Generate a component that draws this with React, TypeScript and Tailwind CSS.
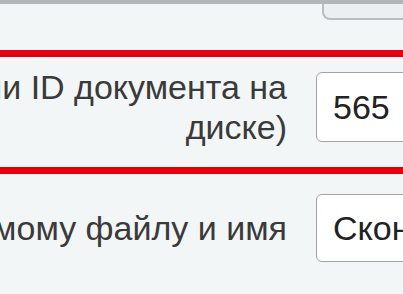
export default function App() {
  return (
    <div className="flex h-[294px] w-[403px] flex-col overflow-hidden bg-[#f3f6f7] font-['Liberation_Sans',Arial,sans-serif] text-[#3a3a3a]">
      <div className="h-[4px] shrink-0 bg-[#b2b5b9]" />
      <div className="ml-[322px] h-[16px] w-[120px] shrink-0 rounded-bl-[8px] border-b-2 border-l-2 border-[#b9bdc0] bg-[#eceff0]" />
      <div className="h-[30px] shrink-0" />

      {/* highlighted row */}
      <div className="flex shrink-0 items-center border-y-[7px] border-[#e3000f] pt-[10px] pb-[20px]">
        <div className="flex w-[287px] shrink-0 flex-col items-end whitespace-nowrap text-[34px] leading-[40px]">
          <span>(или ID документа на</span>
          <span>диске)</span>
        </div>
        <div className="ml-[29px] flex h-[70px] w-[200px] shrink-0 items-center rounded-[6px] border border-[#a3a3a3] bg-white pl-[16px] text-[34px] text-[#222]">
          565
        </div>
      </div>

      <div className="flex shrink-0 items-center pt-[20px] pb-[35px]">
        <div className="flex w-[287px] shrink-0 flex-col items-end whitespace-nowrap text-[34px] leading-[40px]">
          <span>сохраняемому файлу и имя</span>
        </div>
        <div className="ml-[29px] flex h-[68px] w-[300px] shrink-0 items-center whitespace-nowrap rounded-[6px] border border-[#a3a3a3] bg-white pl-[16px] text-[34px] text-[#222]">
          Сконвертированный
        </div>
      </div>

      <div className="h-px shrink-0 bg-white" />
      <div className="flex-1 bg-[#a9acaf]" />
    </div>
  );
}
